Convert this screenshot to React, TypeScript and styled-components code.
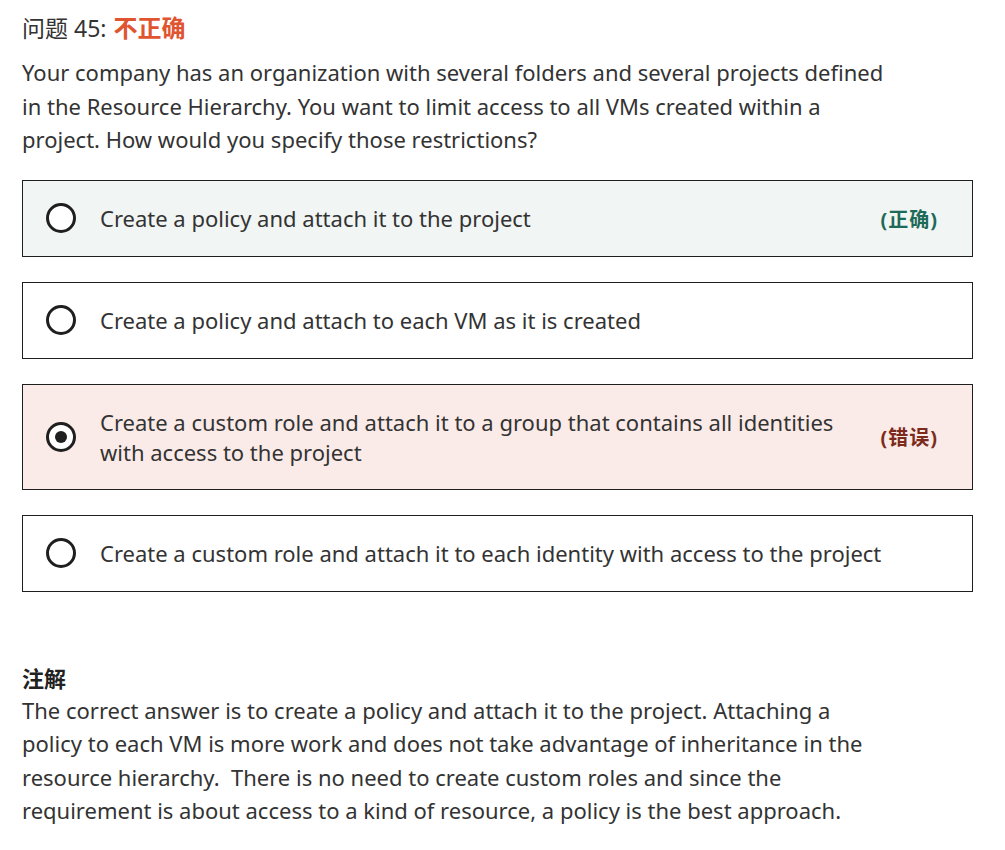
import React from "react";
import styled, { createGlobalStyle } from "styled-components";

const Global = createGlobalStyle`
  html, body { margin: 0; padding: 0; background: #fff; }
  body { font-family: "Noto Sans", "Noto Sans CJK SC", sans-serif; color: #333; }
`;

const Page = styled.div`
  padding: 12px 33px 0 22px;
  width: 951px;
`;

const Title = styled.div`
  font-size: 23px;
  line-height: 32px;
  color: #333;
  display: flex;
  gap: 7px;
`;

const Status = styled.span`
  color: #e0552f;
  font-weight: 700;
  font-size: 24px;
`;

const Question = styled.p`
  margin: 12px 0 23px;
  font-size: 22px;
  line-height: 33.5px;
`;

const Options = styled.div`
  display: flex;
  flex-direction: column;
  gap: 25px;
`;

const Option = styled.div<{ $tone?: "ok" | "bad" }>`
  display: flex;
  align-items: center;
  min-height: 75px;
  padding: 0 34px 0 23px;
  border: 1px solid #1f1f1f;
  background: ${(p) => (p.$tone === "ok" ? "#f1f5f4" : p.$tone === "bad" ? "#fbebe8" : "#fff")};
`;

const Radio = styled.span<{ $checked?: boolean }>`
  flex: none;
  width: 30px;
  height: 30px;
  box-sizing: border-box;
  border: 3px solid #1f1f1f;
  border-radius: 50%;
  display: flex;
  align-items: center;
  justify-content: center;
  margin-right: 24px;
  background: #fff;
  &::after {
    content: "";
    display: ${(p) => (p.$checked ? "block" : "none")};
    width: 12px;
    height: 12px;
    border-radius: 50%;
    background: #1f1f1f;
  }
`;

const OptText = styled.span`
  flex: 1;
  font-size: 22px;
  line-height: 30px;
  padding: 22px 0;
  color: #333;
`;

const Tag = styled.span<{ $tone: "ok" | "bad" }>`
  flex: none;
  margin-left: 24px;
  font-size: 20px;
  font-weight: 700;
  letter-spacing: 1px;
  color: ${(p) => (p.$tone === "ok" ? "#1d6a58" : "#7b2a1c")};
`;

const NoteHead = styled.div`
  margin-top: 70px;
  font-size: 22px;
  font-weight: 700;
  line-height: 32px;
  color: #222;
`;

const NoteText = styled.p`
  margin: 0;
  font-size: 22px;
  line-height: 33.5px;
`;

const options = [
  { text: "Create a policy and attach it to the project", tone: "ok" as const, tag: "(正确)" },
  { text: "Create a policy and attach to each VM as it is created" },
  {
    text: "Create a custom role and attach it to a group that contains all identities with access to the project",
    tone: "bad" as const,
    tag: "(错误)",
    checked: true,
  },
  { text: "Create a custom role and attach it to each identity with access to the project" },
];

export default function App() {
  return (
    <Page>
      <Global />
      <Title>
        <span>问题 45:</span>
        <Status>不正确</Status>
      </Title>
      <Question>
        Your company has an organization with several folders and several projects defined
        <br />
        in the Resource Hierarchy. You want to limit access to all VMs created within a
        <br />
        project. How would you specify those restrictions?
      </Question>
      <Options>
        {options.map((o, i) => (
          <Option key={i} $tone={o.tone}>
            <Radio $checked={o.checked} />
            <OptText>{o.text}</OptText>
            {o.tag && o.tone && <Tag $tone={o.tone}>{o.tag}</Tag>}
          </Option>
        ))}
      </Options>
      <NoteHead>注解</NoteHead>
      <NoteText>
        The correct answer is to create a policy and attach it to the project. Attaching a
        <br />
        policy to each VM is more work and does not take advantage of inheritance in the
        <br />
        resource hierarchy.&nbsp; There is no need to create custom roles and since the
        <br />
        requirement is about access to a kind of resource, a policy is the best approach.
      </NoteText>
    </Page>
  );
}
